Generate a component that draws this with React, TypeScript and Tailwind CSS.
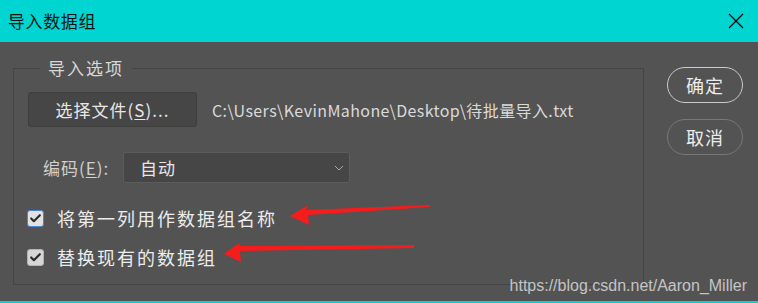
import { Check } from 'lucide-react';

const cjk = "font-['Noto_Sans_CJK_SC','Noto_Sans',sans-serif]";

function CheckBox({ focused }: { focused?: boolean }) {
  return (
    <span
      className={
        focused
          ? 'flex h-[17px] w-[17px] shrink-0 items-center justify-center rounded-[3px] border border-[#4a86d8] bg-[#e2e2e2]'
          : 'flex h-[17px] w-[17px] shrink-0 items-center justify-center rounded-[3px] border border-[#b4b4b4] bg-[#d6d6d6]'
      }
    >
      <Check size={13} strokeWidth={4} className="text-[#2b2b2b]" />
    </span>
  );
}

export default function App() {
  return (
    <div className={`relative flex h-[303px] w-[758px] flex-col overflow-hidden bg-[#535353] ${cjk}`}>
      {/* title bar */}
      <div className="flex h-[42px] items-center justify-between bg-[#00d5d2] pl-[8px] pr-[14px]">
        <span className="text-[17px] tracking-[0.6px] text-[#111]">导入数据组</span>
        <svg width="16" height="16" viewBox="0 0 16 16" className="text-black">
          <path d="M1 1 L15 15 M15 1 L1 15" stroke="currentColor" strokeWidth="1.2" fill="none" />
        </svg>
      </div>

      {/* body */}
      <div className="flex flex-1 border-b-2 border-[#00d5d2] pl-[13px] pt-[26px]">
        <div className="relative h-[217px] w-[631px] border border-[#454545] pl-[14px] pt-[23px]">
          <span className="absolute -top-[11px] left-[26px] bg-[#535353] px-[8px] text-[17px] leading-[20px] tracking-[2px] text-[#d8d8d8]">
            导入选项
          </span>

          <div className="flex h-[35px] items-center">
            <button className="h-[35px] w-[169px] rounded-[3px] border border-[#3e3e3e] bg-[#464646] text-[17px] tracking-[1px] text-[#e6e6e6]">
              选择文件(<span className="underline underline-offset-2">S</span>)...
            </button>
            <span className="ml-[15px] text-[16px] tracking-[0.4px] text-[#dadada]">C:\Users\KevinMahone\Desktop\待批量导入.txt</span>
          </div>

          <div className="mt-[25px] flex h-[31px] items-center pl-[15px]">
            <span className="w-[80px] text-[17px] tracking-[1px] text-[#cfcfcf]">
              编码(<span className="underline underline-offset-2">E</span>):
            </span>
            <div className="flex h-[31px] w-[227px] items-center justify-between rounded-[3px] border border-[#5c5c5c] bg-[#464646] pl-[16px] pr-[5px]">
              <span className="text-[17px] tracking-[1px] text-[#e6e6e6]">自动</span>
              <svg width="10" height="6" viewBox="0 0 10 6">
                <path d="M1 1 L5 5 L9 1" stroke="#a8a8a8" strokeWidth="1" fill="none" />
              </svg>
            </div>
          </div>

          <div className="mt-[27px] -ml-[1px] flex h-[17px] items-center">
            <CheckBox focused />
            <span className="ml-[13px] text-[18px] tracking-[2px] text-[#ececec]">将第一列用作数据组名称</span>
          </div>
          <div className="mt-[22px] -ml-[1px] flex h-[17px] items-center">
            <CheckBox />
            <span className="ml-[13px] text-[18px] tracking-[2px] text-[#ececec]">替换现有的数据组</span>
          </div>
        </div>

        <div className="ml-[23px] flex flex-col gap-[16px]">
          <button className="-mt-[1px] h-[36px] w-[76px] rounded-full border-[1.5px] border-[#cbcbcb] text-[18px] tracking-[1px] text-[#ececec]">确定</button>
          <button className="h-[36px] w-[76px] rounded-full border-[1.5px] border-[#787878] text-[18px] tracking-[1px] text-[#ececec]">取消</button>
        </div>
      </div>

      {/* annotation arrows */}
      <svg className="pointer-events-none absolute left-0 top-0" width="758" height="303" viewBox="0 0 758 303">
        <polygon points="290,216 308,205 306,210 430,205 430,207 308,215 309,225" fill="#f51c1c" />
        <polygon points="224,254 239,243 240,246 414,245 414,248 240,251 241,262" fill="#f51c1c" />
      </svg>

      <span className="pointer-events-none absolute right-[11px] top-[274px] font-['Liberation_Sans',Arial,sans-serif] text-[16px] text-[#c4c4c4]">
        https://blog.csdn.net/Aaron_Miller
      </span>
    </div>
  );
}
